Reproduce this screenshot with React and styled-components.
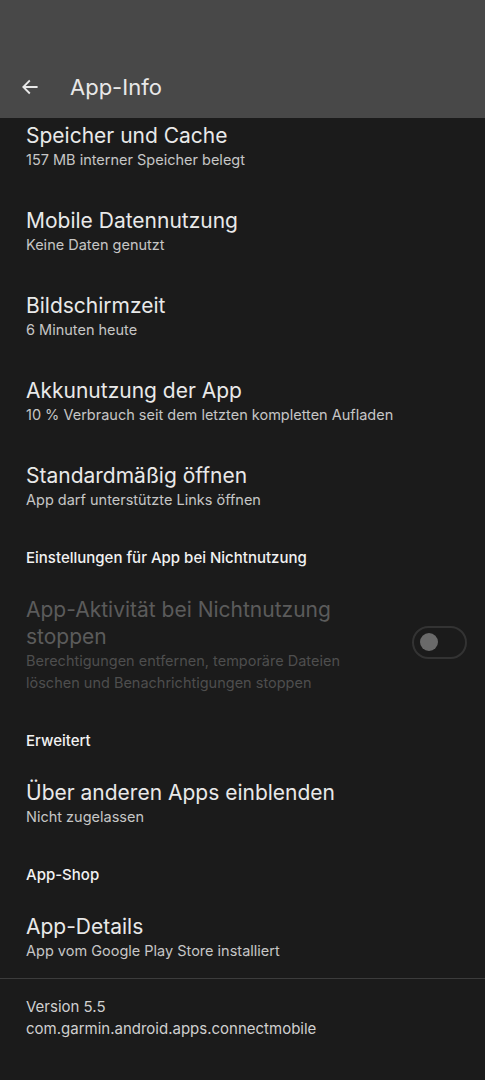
import React from "react";
import { styled, createGlobalStyle } from "styled-components";

const GlobalStyle = createGlobalStyle`
  html, body {
    margin: 0;
    padding: 0;
    background: #1b1b1b;
  }
  body {
    font-family: Inter, Roboto, "Noto Sans", sans-serif;
    -webkit-font-smoothing: antialiased;
  }
`;

const Screen = styled.div`
  width: 485px;
  height: 1080px;
  background: #1b1b1b;
  overflow: hidden;
  display: flex;
  flex-direction: column;
`;

const Header = styled.header`
  height: 118px;
  flex-shrink: 0;
  background: #484848;
  display: flex;
  flex-direction: column;
  justify-content: flex-end;
  position: relative;
  z-index: 1;
`;

const Toolbar = styled.div`
  height: 62px;
  display: flex;
  align-items: center;
  padding-left: 20px;
  gap: 30px;
`;

const BackButton = styled.button`
  width: 20px;
  height: 20px;
  padding: 0;
  border: none;
  background: transparent;
  display: flex;
  align-items: center;
  justify-content: center;
  color: #e8e8e8;
`;

const HeaderTitle = styled.h1`
  margin: 0;
  font-size: 22px;
  font-weight: 400;
  color: #e8e8e8;
`;

const Content = styled.div`
  margin-top: -14px;
  display: flex;
  flex-direction: column;
`;

const Item = styled.div`
  display: flex;
  align-items: center;
  justify-content: space-between;
  padding: 18px 26px ${(p) => (p.$last ? "16px" : "18px")};
  gap: 20px;
`;

const ItemText = styled.div`
  flex: 1;
  min-width: 0;
  max-width: ${(p) => (p.$narrow ? "340px" : "none")};
`;

const Title = styled.div`
  font-size: 21px;
  line-height: 27px;
  color: ${(p) => (p.$disabled ? "#5b5b5b" : "#e9e9e9")};
`;

const Summary = styled.div`
  font-size: 14.5px;
  line-height: 22px;
  color: ${(p) => (p.$disabled ? "#4e4e4e" : "#c6c6c6")};
`;

const Category = styled.div`
  padding: 19px 26px 10px;
  font-size: 15px;
  line-height: 20px;
  font-weight: 500;
  color: #f2f2f2;
`;

const Track = styled.div`
  box-sizing: border-box;
  width: 55px;
  height: 33px;
  border: 2px solid #333333;
  border-radius: 17px;
  display: flex;
  align-items: center;
  padding-left: 6px;
  flex-shrink: 0;
  margin-right: -8px;
  margin-bottom: 6px;
`;

const Thumb = styled.div`
  width: 18px;
  height: 18px;
  border-radius: 50%;
  background: #6a6a6a;
`;

const Divider = styled.hr`
  margin: 0;
  border: none;
  border-top: 1.5px solid #3c3c3c;
`;

const Footer = styled.div`
  padding: 17px 26px 15px;
  font-size: 15px;
  line-height: 22px;
  color: #d0d0d0;
`;

const items = [
  { title: "Speicher und Cache", summary: "157 MB interner Speicher belegt" },
  { title: "Mobile Datennutzung", summary: "Keine Daten genutzt" },
  { title: "Bildschirmzeit", summary: "6 Minuten heute" },
  {
    title: "Akkunutzung der App",
    summary: "10 % Verbrauch seit dem letzten kompletten Aufladen",
  },
  {
    title: "Standardmäßig öffnen",
    summary: "App darf unterstützte Links öffnen",
  },
];

function Pref({ title, summary, last }) {
  return (
    <Item $last={last}>
      <ItemText>
        <Title>{title}</Title>
        <Summary>{summary}</Summary>
      </ItemText>
    </Item>
  );
}

export default function App() {
  return (
    <>
      <GlobalStyle />
      <Screen>
        <Header>
          <Toolbar>
            <BackButton aria-label="Zurück">
              <svg width="20" height="20" viewBox="0 0 24 24" fill="none">
                <path
                  d="M20 12H4.5M11 5l-7 7 7 7"
                  stroke="currentColor"
                  strokeWidth="2.2"
                  strokeLinecap="square"
                />
              </svg>
            </BackButton>
            <HeaderTitle>App-Info</HeaderTitle>
          </Toolbar>
        </Header>
        <Content>
          {items.map((it) => (
            <Pref key={it.title} title={it.title} summary={it.summary} />
          ))}

          <Category>Einstellungen für App bei Nichtnutzung</Category>
          <Item>
            <ItemText $narrow>
              <Title $disabled>App-Aktivität bei Nichtnutzung stoppen</Title>
              <Summary $disabled>
                Berechtigungen entfernen, temporäre Dateien löschen und
                Benachrichtigungen stoppen
              </Summary>
            </ItemText>
            <Track>
              <Thumb />
            </Track>
          </Item>

          <Category>Erweitert</Category>
          <Pref title="Über anderen Apps einblenden" summary="Nicht zugelassen" />

          <Category>App-Shop</Category>
          <Pref
            title="App-Details"
            summary="App vom Google Play Store installiert"
            last
          />

          <Divider />
          <Footer>
            <div>Version 5.5</div>
            <div>com.garmin.android.apps.connectmobile</div>
          </Footer>
        </Content>
      </Screen>
    </>
  );
}
